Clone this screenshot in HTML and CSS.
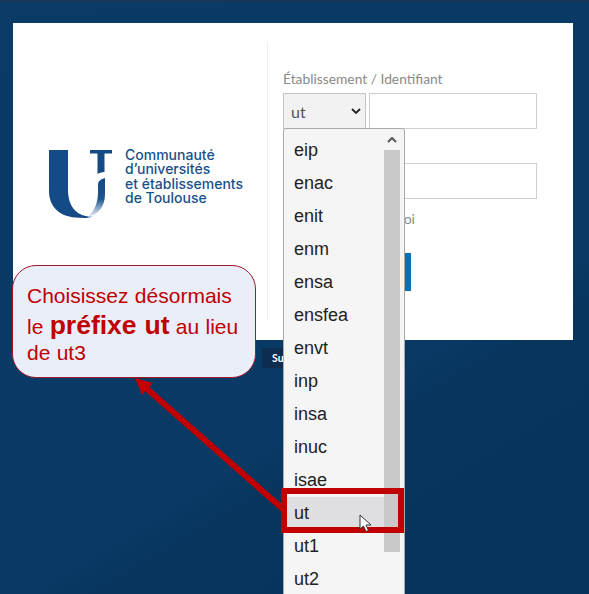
FILE: index.html
```html
<!DOCTYPE html>
<html lang="fr">
<head>
<meta charset="utf-8">
<title>Connexion</title>
<link rel="stylesheet" href="styles.css">
</head>
<body>
<div class="stage">
  <div class="topline"></div>
  <main class="card">
    <section class="brand">
      <svg class="mark" width="66" height="70" viewBox="0 0 66 70" aria-hidden="true">
        <defs>
          <linearGradient id="ribbon" x1="0" y1="0" x2="0" y2="1">
            <stop offset="0" stop-color="#144a85"/>
            <stop offset="0.55" stop-color="#1d5590"/>
            <stop offset="0.85" stop-color="#a9c0d6"/>
            <stop offset="1" stop-color="#e4ebf2"/>
          </linearGradient>
        </defs>
        <path fill="#144a85" d="M1 1H20V41C20 52 24 62 34 66C40 68 44 68 46 67C40 69.500 36 69 31 68.800C12 68.500 1 58 1 42Z"/>
        <path fill="url(#ribbon)" d="M57 29V45C57 58 50 66 40 67.500C47 62 50 52 50 44V36C50 32 53 30 57 29Z"/>
        <path fill="#144a85" d="M42 1H64V4.500H56.500V23C53.500 23 51 24 49.500 25V4.500H42Z"/>
      </svg>
      <p class="brand-name">Communauté<br>d’universités<br>et établissements<br>de Toulouse</p>
    </section>
    <form class="login">
      <label class="field-label">Établissement / Identifiant</label>
      <div class="id-row">
        <div class="prefix"><span>ut</span>
          <svg width="10" height="6" viewBox="0 0 10 6" aria-hidden="true"><path d="M1 1l4 4 4-4" fill="none" stroke="#222" stroke-width="1.800"/></svg>
        </div>
        <div class="textbox id-box"></div>
      </div>
      <label class="field-label pass-label">Mot de passe</label>
      <div class="textbox pass-box"></div>
      <div class="remember">Se souvenir de moi</div>
      <div class="submit">Connexion</div>
    </form>
  </main>
  <footer class="foot"><span class="support">Support</span></footer>

  <div class="dropdown">
    <ul class="options">
      <li>eip</li><li>enac</li><li>enit</li><li>enm</li><li>ensa</li><li>ensfea</li><li>envt</li><li>inp</li><li>insa</li><li>inuc</li><li>isae</li><li class="current">ut</li><li>ut1</li><li>ut2</li>
    </ul>
    <div class="scrollbar">
      <svg class="scroll-up" width="10" height="6" viewBox="0 0 10 6" aria-hidden="true"><path d="M1 5l4-4 4 4" fill="none" stroke="#555" stroke-width="2"/></svg>
      <div class="thumb"></div>
    </div>
  </div>

  <svg class="arrow" width="589" height="594" viewBox="0 0 589 594" aria-hidden="true">
    <path d="M284 510L146 388" stroke="#c00000" stroke-width="6" fill="none"/>
    <path d="M135 378L153 383L142 395Z" fill="#c00000"/>
  </svg>
  <div class="highlight"></div>
  <svg class="cursor" width="14" height="19" viewBox="0 0 14 19" aria-hidden="true"><path d="M1 1V15L4.500 12L7 17.500L9.500 16.500L7 11H12Z" fill="#fff" stroke="#333" stroke-width="1"/></svg>

  <aside class="callout">
    <p class="callout-line first">Choisissez désormais</p>
    <p class="callout-line second">le <strong>préfixe ut</strong> au lieu</p>
    <p class="callout-line third">de ut3</p>
  </aside>
</div>
</body>
</html>
```

FILE: styles.css
```css
* { box-sizing: border-box; }
html, body { margin: 0; height: 100%; overflow: hidden; }
body { font-family: "Liberation Sans", Arial, sans-serif; }

.stage {
  position: relative;
  width: 589px;
  height: 594px;
  overflow: hidden;
  padding: 23px 16px 0 13px;
  background: linear-gradient(149deg, #0a3b67 0%, #093a65 64%, #07355e 69%, #06335c 100%);
}
.topline {
  position: absolute;
  left: 0; top: 0; right: 0;
  height: 3px;
  background: #14385a;
}

.card {
  display: flex;
  height: 317px;
  padding: 19px 0 20px;
  background: #fff;
}
.brand {
  display: flex;
  align-items: center;
  gap: 11px;
  width: 255px;
  padding: 5px 0 0 35px;
  border-right: 1px solid #f0f0f0;
}
.mark { flex: none; }
.brand-name {
  margin: 0 0 14px;
  color: #1b5088;
  font: 500 14px/14.400px Inter, "Liberation Sans", sans-serif;
  white-space: nowrap;
}

.login {
  width: 254px;
  margin-left: 15px;
  padding-top: 28px;
  font-family: Lato, "Liberation Sans", sans-serif;
}
.field-label {
  display: block;
  height: 23px;
  color: #8a8a8a;
  font-size: 13.800px;
  line-height: 18px;
}
.id-row { display: flex; gap: 3px; }
.prefix {
  display: flex;
  align-items: center;
  justify-content: space-between;
  width: 83px;
  height: 36px;
  padding: 0 4px 0 7px;
  background: #f2f2f2;
  border: 1px solid #c4c4c4;
  color: #555;
  font-size: 16px;
}
.textbox {
  height: 36px;
  background: #fff;
  border: 1px solid #cfcfcf;
}
.id-box { width: 168px; }
.pass-label { margin-top: 11px; }
.pass-box { width: 254px; }
.remember {
  margin-top: 11px;
  padding-left: 16px;
  color: #8a8a8a;
  font-size: 14px;
  line-height: 18px;
}
.submit {
  width: 128px;
  height: 38px;
  margin-top: 25px;
  background: #0a70b0;
  color: #fff;
  font-size: 14px;
  line-height: 38px;
  text-align: center;
}

.foot { padding: 8px 0 0 249px; }
.support {
  display: inline-block;
  height: 20px;
  padding: 0 10px;
  border-radius: 2px;
  background: #0d2c50;
  color: #fff;
  font: 700 10.500px/20px Lato, "Liberation Sans", sans-serif;
}

.dropdown {
  position: absolute;
  left: 283px;
  top: 128px;
  display: flex;
  width: 122px;
  height: 480px;
  padding-top: 5px;
  background: #f5f5f5;
  border: 1px solid #a8a8a8;
  border-radius: 3px;
}
.options {
  flex: 1;
  margin: 0;
  padding: 0;
  list-style: none;
  color: #222;
  font-size: 18px;
}
.options li { height: 33px; padding-left: 10px; line-height: 33px; }
.options .current { background: #dedee3; }
.scrollbar {
  display: flex;
  flex-direction: column;
  align-items: center;
  flex: none;
  width: 16px;
  margin: -5px 4px 0 0;
  background: #f5f5f5;
}
.scroll-up { flex: none; margin: 8px 0 7px; }
.thumb { width: 16px; height: 402px; background: #c9c9c9; flex: none; }

.arrow { position: absolute; left: 0; top: 0; pointer-events: none; }
.highlight {
  position: absolute;
  left: 281px;
  top: 488px;
  width: 123px;
  height: 45px;
  border: 6px solid #c00000;
}
.cursor { position: absolute; left: 359px; top: 514px; }

.callout {
  position: absolute;
  left: 12px;
  top: 265px;
  width: 244px;
  height: 113px;
  padding: 15px 14px 0;
  background: #eaeef8;
  border: 1.500px solid #a01828;
  border-radius: 24px;
  color: #c00000;
  font-size: 21px;
  word-spacing: 0.500px;
}
.callout-line { margin: 0; white-space: nowrap; }
.first { line-height: 29px; }
.second { line-height: 30px; }
.third { line-height: 22px; }
.callout strong { font-size: 26.500px; }
```
